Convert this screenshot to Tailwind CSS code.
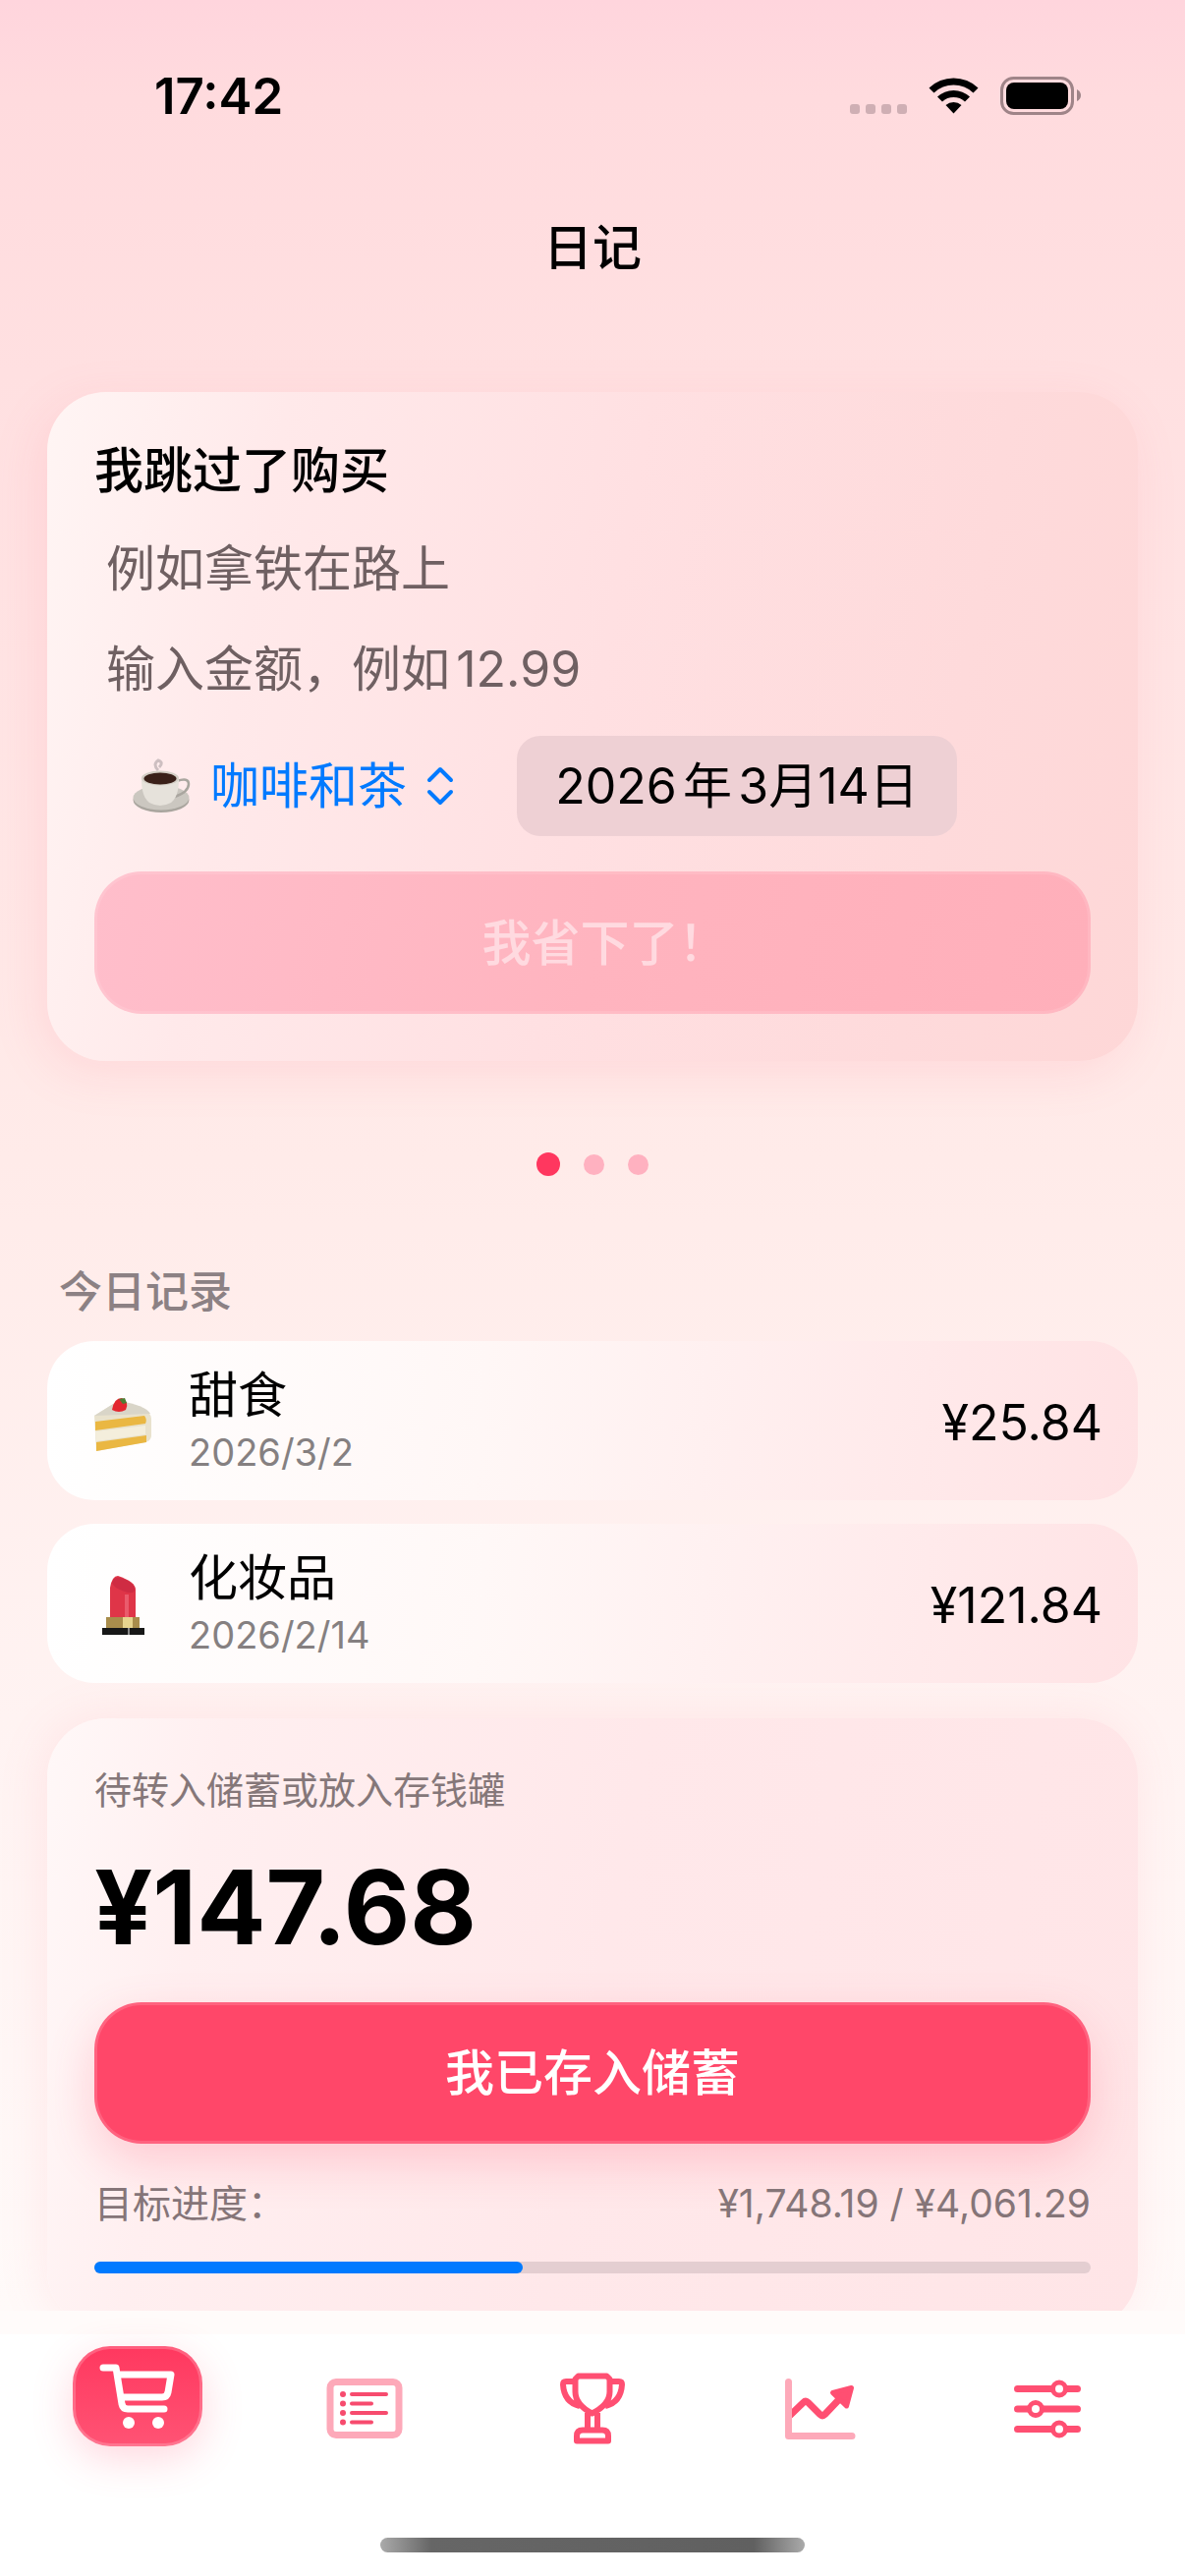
<!DOCTYPE html>
<html lang="zh-CN">
<head>
<meta charset="utf-8">
<meta name="viewport" content="width=device-width, initial-scale=1">
<title>日记</title>
<script src="https://cdn.jsdelivr.net/npm/@tailwindcss/browser@4"></script>
</head>
<body class="min-h-screen flex flex-col text-black font-['Inter','Noto_Sans_CJK_SC',sans-serif] text-[50px] leading-[60px] [text-autospace:normal] bg-[linear-gradient(180deg,#ffd5dd_0px,#ffdbde_100px,#ffe0e1_380px,#ffebe9_1180px,#fff3f2_1750px,#fffaf9_2350px)]">

<header>
  <div class="flex items-center justify-between pt-[68px] pl-[157px] pr-[104px]">
    <span class="text-[51px] font-semibold">17:42</span>
    <span class="flex items-center gap-[22px]" aria-hidden="true">
      <svg class="w-[58px] h-[40px]" viewBox="0 0 58 40" fill="#cfafb4"><rect y="28" width="10" height="10" rx="3"/><rect x="16" y="28" width="10" height="10" rx="3"/><rect x="32" y="28" width="10" height="10" rx="3"/><rect x="48" y="28" width="10" height="10" rx="3"/></svg>
      <svg class="w-[51px] h-[40px]" viewBox="0 0 51 40"><path d="M0.5 11.5A36 36 0 0 1 50.500 11.500L45.500 16.500A29 29 0 0 0 5.500 16.500ZM9 20.500A24 24 0 0 1 42 20.500L37 25.500A17 17 0 0 0 14 25.500ZM17.500 29A12 12 0 0 1 33.500 29L25.500 37.500Z"/></svg>
      <svg class="w-[84px] h-[40px]" viewBox="0 0 84 40"><rect x="1.500" y="1.500" width="72" height="36" rx="12" fill="none" stroke="#9f8488" stroke-width="3"/><rect x="6" y="6" width="63" height="27" rx="8"/><path d="M78 13v12q4-2 4-6t-4-6" fill="#9f8488"/></svg>
    </span>
  </div>
  <h1 class="pt-[94px] text-center font-medium">日记</h1>
</header>

<main class="flex-1 px-12 pt-[117px]">
  <form class="rounded-[60px] px-12 pt-[50px] pb-12 bg-[linear-gradient(100deg,#fff5f4_0%,#ffe9ea_20%,#ffe0e2_50%,#fedadb_80%,#fed7d7_100%)] shadow-[-8px_12px_48px_rgba(255,120,140,0.15)]">
    <h2 class="font-medium">我跳过了购买</h2>
    <input aria-label="例如拿铁在路上" placeholder="例如拿铁在路上" class="block w-full mt-10 px-3 h-[60px] outline-none placeholder:text-[#6f6062] placeholder:opacity-100">
    <input aria-label="输入金额" placeholder="输入金额，例如12.99" class="block w-full mt-[42px] px-3 h-[60px] outline-none placeholder:text-[#6f6062] placeholder:opacity-100">
    <div class="flex items-center mt-[38px]">
      <button type="button" class="flex items-center pl-[38px] w-[430px] text-[#007aff]">
        <svg class="w-[62px] h-[60px]" viewBox="0 0 62 60" aria-hidden="true">
          <ellipse cx="30" cy="44" rx="28.500" ry="13" fill="#a9a59e"/><ellipse cx="30" cy="42" rx="28.500" ry="12.500" fill="#cbc7c0"/>
          <path d="M46 25q12-4 12 3 0 8-14 13" fill="none" stroke="#aaa69f" stroke-width="2.500"/>
          <path d="M10 23q0 18 8 24 11 6 22 0 8-6 8-24z" fill="#e6e2db"/><ellipse cx="29" cy="22" rx="19" ry="7.500" fill="#d2cdc4"/><ellipse cx="29" cy="22.500" rx="16.500" ry="6" fill="#3a2019"/>
          <path d="M27 14q-6-6 0-10 6 2 1 7" fill="none" stroke="#cdbfc1" stroke-width="3"/>
        </svg>
        <span class="pl-[18px]">咖啡和茶</span>
        <svg class="ml-5 w-[28px] h-[42px]" viewBox="0 0 28 42" fill="none" stroke="#007aff" stroke-width="4" stroke-linecap="round" stroke-linejoin="round" aria-hidden="true"><path d="M3 15 14 4l11 11M3 27l11 11 11-11"/></svg>
      </button>
      <button type="button" class="h-[102px] w-[448px] rounded-[24px] bg-[#eed0d4] whitespace-nowrap [text-autospace:no-autospace]"><span class="[text-autospace:normal]">2026年3</span>月14日</button>
    </div>
    <button type="submit" disabled class="mt-9 block w-full h-[145px] rounded-[48px] border-[3px] border-white/10 bg-[linear-gradient(100deg,#ffbecb,#ffb4bf_50%,#ffafba)] bg-origin-border font-medium text-[#ffdae0] [font-feature-settings:'halt']">我省下了！</button>
  </form>

  <div class="flex justify-center items-center gap-6 mt-[93px]" aria-hidden="true">
    <span class="size-6 rounded-full bg-[#ff375f]"></span><span class="size-[21px] rounded-full bg-[#ffb1c0]"></span><span class="size-[21px] rounded-full bg-[#ffb1c0]"></span>
  </div>

  <section>
    <h2 class="mt-[88px] pl-3 text-[44px] font-medium text-[#8c8184]">今日记录</h2>
    <ul class="mt-5 flex flex-col gap-6">
      <li class="flex items-center h-[162px] rounded-[48px] pl-12 pr-9 pt-1 bg-[linear-gradient(95deg,#ffffff,#fff7f6_40%,#ffe2e4)]">
        <svg class="w-[60px] h-[64px]" viewBox="0 -4 60 64" aria-hidden="true">
          <path d="M0 21 24 6Q58 12 58 24v18q-1 5-6 6L2 57z" fill="#e9e2cd"/>
          <path d="M1 27 51 21q3 4 1 8L1 36zM2 48l51-7v7L2 57z" fill="#eab742"/><path d="M1 37l51-6v9L2 47z" fill="#f4eedc"/><path d="M0 21 24 6q28 4 33 13z" fill="#d9d5c8"/>
          <path d="M18 15q2-12 10-12 8 4 4 12-7 4-14 0" fill="#e3262f"/><path d="M25 4l4 5 4-1-2-5z" fill="#4d7d33"/>
        </svg>
        <div class="flex-1 pl-9"><p>甜食</p><p class="text-[38px] leading-[57px] text-[#858081]">2026/3/2</p></div>
        <span>¥25.84</span>
      </li>
      <li class="flex items-center h-[162px] rounded-[48px] pl-12 pr-9 pt-1 bg-[linear-gradient(95deg,#ffffff,#fff8f7_40%,#ffe3e5)]">
        <svg class="w-[60px] h-[64px]" viewBox="0 0 60 64" aria-hidden="true">
          <path d="M16 45V14Q18 2 24 2q18 6 18 14v29z" fill="#df3548"/><path d="M18 9Q20 1 30 5q12 5 11 12-2 4-10 1-12-4-13-9" fill="#cf2c43"/><path d="M31 21h4v23h-4z" fill="#ea5b6c"/>
          <path d="M12 44h34v11H12z" fill="#a98d4c"/><path d="M29 44h10v11H29z" fill="#e6d38e"/><path d="M8 55h43v7H8z" fill="#171717"/><path d="M34 55h2v7h-2z" fill="#888"/>
        </svg>
        <div class="flex-1 pl-9"><p>化妆品</p><p class="text-[38px] leading-[57px] text-[#858081]">2026/2/14</p></div>
        <span>¥121.84</span>
      </li>
    </ul>
  </section>

  <section class="mt-[36px] -mb-5 rounded-[60px] px-12 pt-[46px] pb-[57px] bg-[linear-gradient(100deg,#fff8f8_0%,#ffeff0_15%,#ffe8ea_50%,#ffe5e7_100%)] shadow-[-4px_0_48px_rgba(255,120,140,0.12)]">
    <h2 class="text-[38px] leading-[54px] text-[#857779]">待转入储蓄或放入存钱罐</h2>
    <p class="mt-8 text-[104px] leading-[120px] font-bold">¥147.68</p>
    <button type="button" class="mt-[37px] block w-full h-[144px] rounded-[48px] border-[3px] border-white/15 bg-[#ff4769] bg-origin-border font-medium text-white shadow-[0_18px_48px_rgba(255,71,105,0.22)]">我已存入储蓄</button>
    <div class="mt-[34px] flex justify-between text-[39px] leading-[54px] text-[#857578]"><span>目标进度：</span><span>¥1,748.19 / ¥4,061.29</span></div>
    <div role="progressbar" aria-label="目标进度" aria-valuenow="43" aria-valuemin="0" aria-valuemax="100" class="mt-8 h-3 rounded-full bg-[#e4ced1]"><div class="h-3 rounded-full bg-[#007aff]" style="width:43%"></div></div>
  </section>
</main>

<footer class="relative h-[270px] bg-[linear-gradient(180deg,#fffbfa_24px,#ffffff_24px)]">
  <nav class="grid grid-cols-5 items-start justify-items-center px-6 pt-9">
    <a href="#journal" aria-label="日记" class="flex items-center justify-center w-[132px] h-[102px] rounded-[38px] border-[3px] border-white/20 bg-[linear-gradient(180deg,#ff385f,#ff5374)] bg-origin-border shadow-[0_12px_42px_rgba(255,71,105,0.22)]">
      <svg class="w-[78px] h-[68px]" viewBox="1 0 78 68" fill="none" stroke="#fff" stroke-width="7" stroke-linecap="round" stroke-linejoin="round"><path d="M5 5h13l6 37q1 5 6 5h37M20 12h54l-3 18q-1 5-6 5H24"/><circle cx="31" cy="61" r="6" fill="#fff" stroke="none"/><circle cx="61" cy="61" r="6" fill="#fff" stroke="none"/></svg>
    </a>
    <a href="#list" aria-label="清单" class="pt-[33px]"><svg class="w-[78px] h-[62px]" viewBox="0 0 78 62" fill="none"><rect x="4" y="3.500" width="70" height="54" rx="6" stroke="#fda9b9" stroke-width="7"/><g stroke="#f74b6e" stroke-width="4" stroke-linecap="round"><path d="M26 16h35M26 25.500h20M26 35h35M26 44.500h20"/></g><g fill="#f74b6e"><circle cx="17" cy="16" r="3"/><circle cx="17" cy="25.500" r="3"/><circle cx="17" cy="35" r="3"/><circle cx="17" cy="44.500" r="3"/></g></svg></a>
    <a href="#goals" aria-label="成就" class="pt-[27px]"><svg class="w-[66px] h-[74px]" viewBox="0 0 66 74" fill="none" stroke="#ff4f72" stroke-width="6" stroke-linejoin="round"><path d="M18.500 3.500h29l3 3v13q0 13-18 22-17-9-17-22v-13zM16 9H6q-3 0-3 3 1 18 17 22M50 9h10q3 0 3 3-1 18-17 22M28 41v16M38 41v16M23 58.500h20q6 0 6 6v5H17v-5q0-6 6-6z"/></svg></a>
    <a href="#stats" aria-label="统计" class="pt-[33px]"><svg class="w-[72px] h-[62px]" viewBox="0 0 72 62" fill="none" stroke-linecap="round" stroke-linejoin="round"><path d="M5 37.500 18.500 24.500Q21 22 23.500 24.500L35.500 36.500Q38 39 40.500 36.500L58 18" stroke="#ff4f72" stroke-width="7"/><path d="M48.500 14.500 67.500 9.500 62.500 28z" fill="#ff4f72" stroke="#ff4f72" stroke-width="5"/><path d="M3.500 3.500v55H68" stroke="#fda9b9" stroke-width="7"/></svg></a>
    <a href="#settings" aria-label="设置" class="pt-[34px]"><svg class="w-[68px] h-[60px]" viewBox="0 0 68 60" fill="#fff" stroke="#ff4f72" stroke-linecap="round"><path d="M3.500 9.500h61M3.500 30h61M3.500 50.500h61" stroke-width="7"/><g stroke-width="5"><circle cx="46" cy="9.500" r="6.500"/><circle cx="22" cy="30" r="6.500"/><circle cx="46" cy="50.500" r="6.500"/></g></svg></a>
  </nav>
  <div class="absolute bottom-6 inset-x-0 mx-auto w-[432px] h-[15px] rounded-full bg-[linear-gradient(90deg,#aaa,#666_12%,#606060_88%,#aaa)]"></div>
</footer>
</body>
</html>
